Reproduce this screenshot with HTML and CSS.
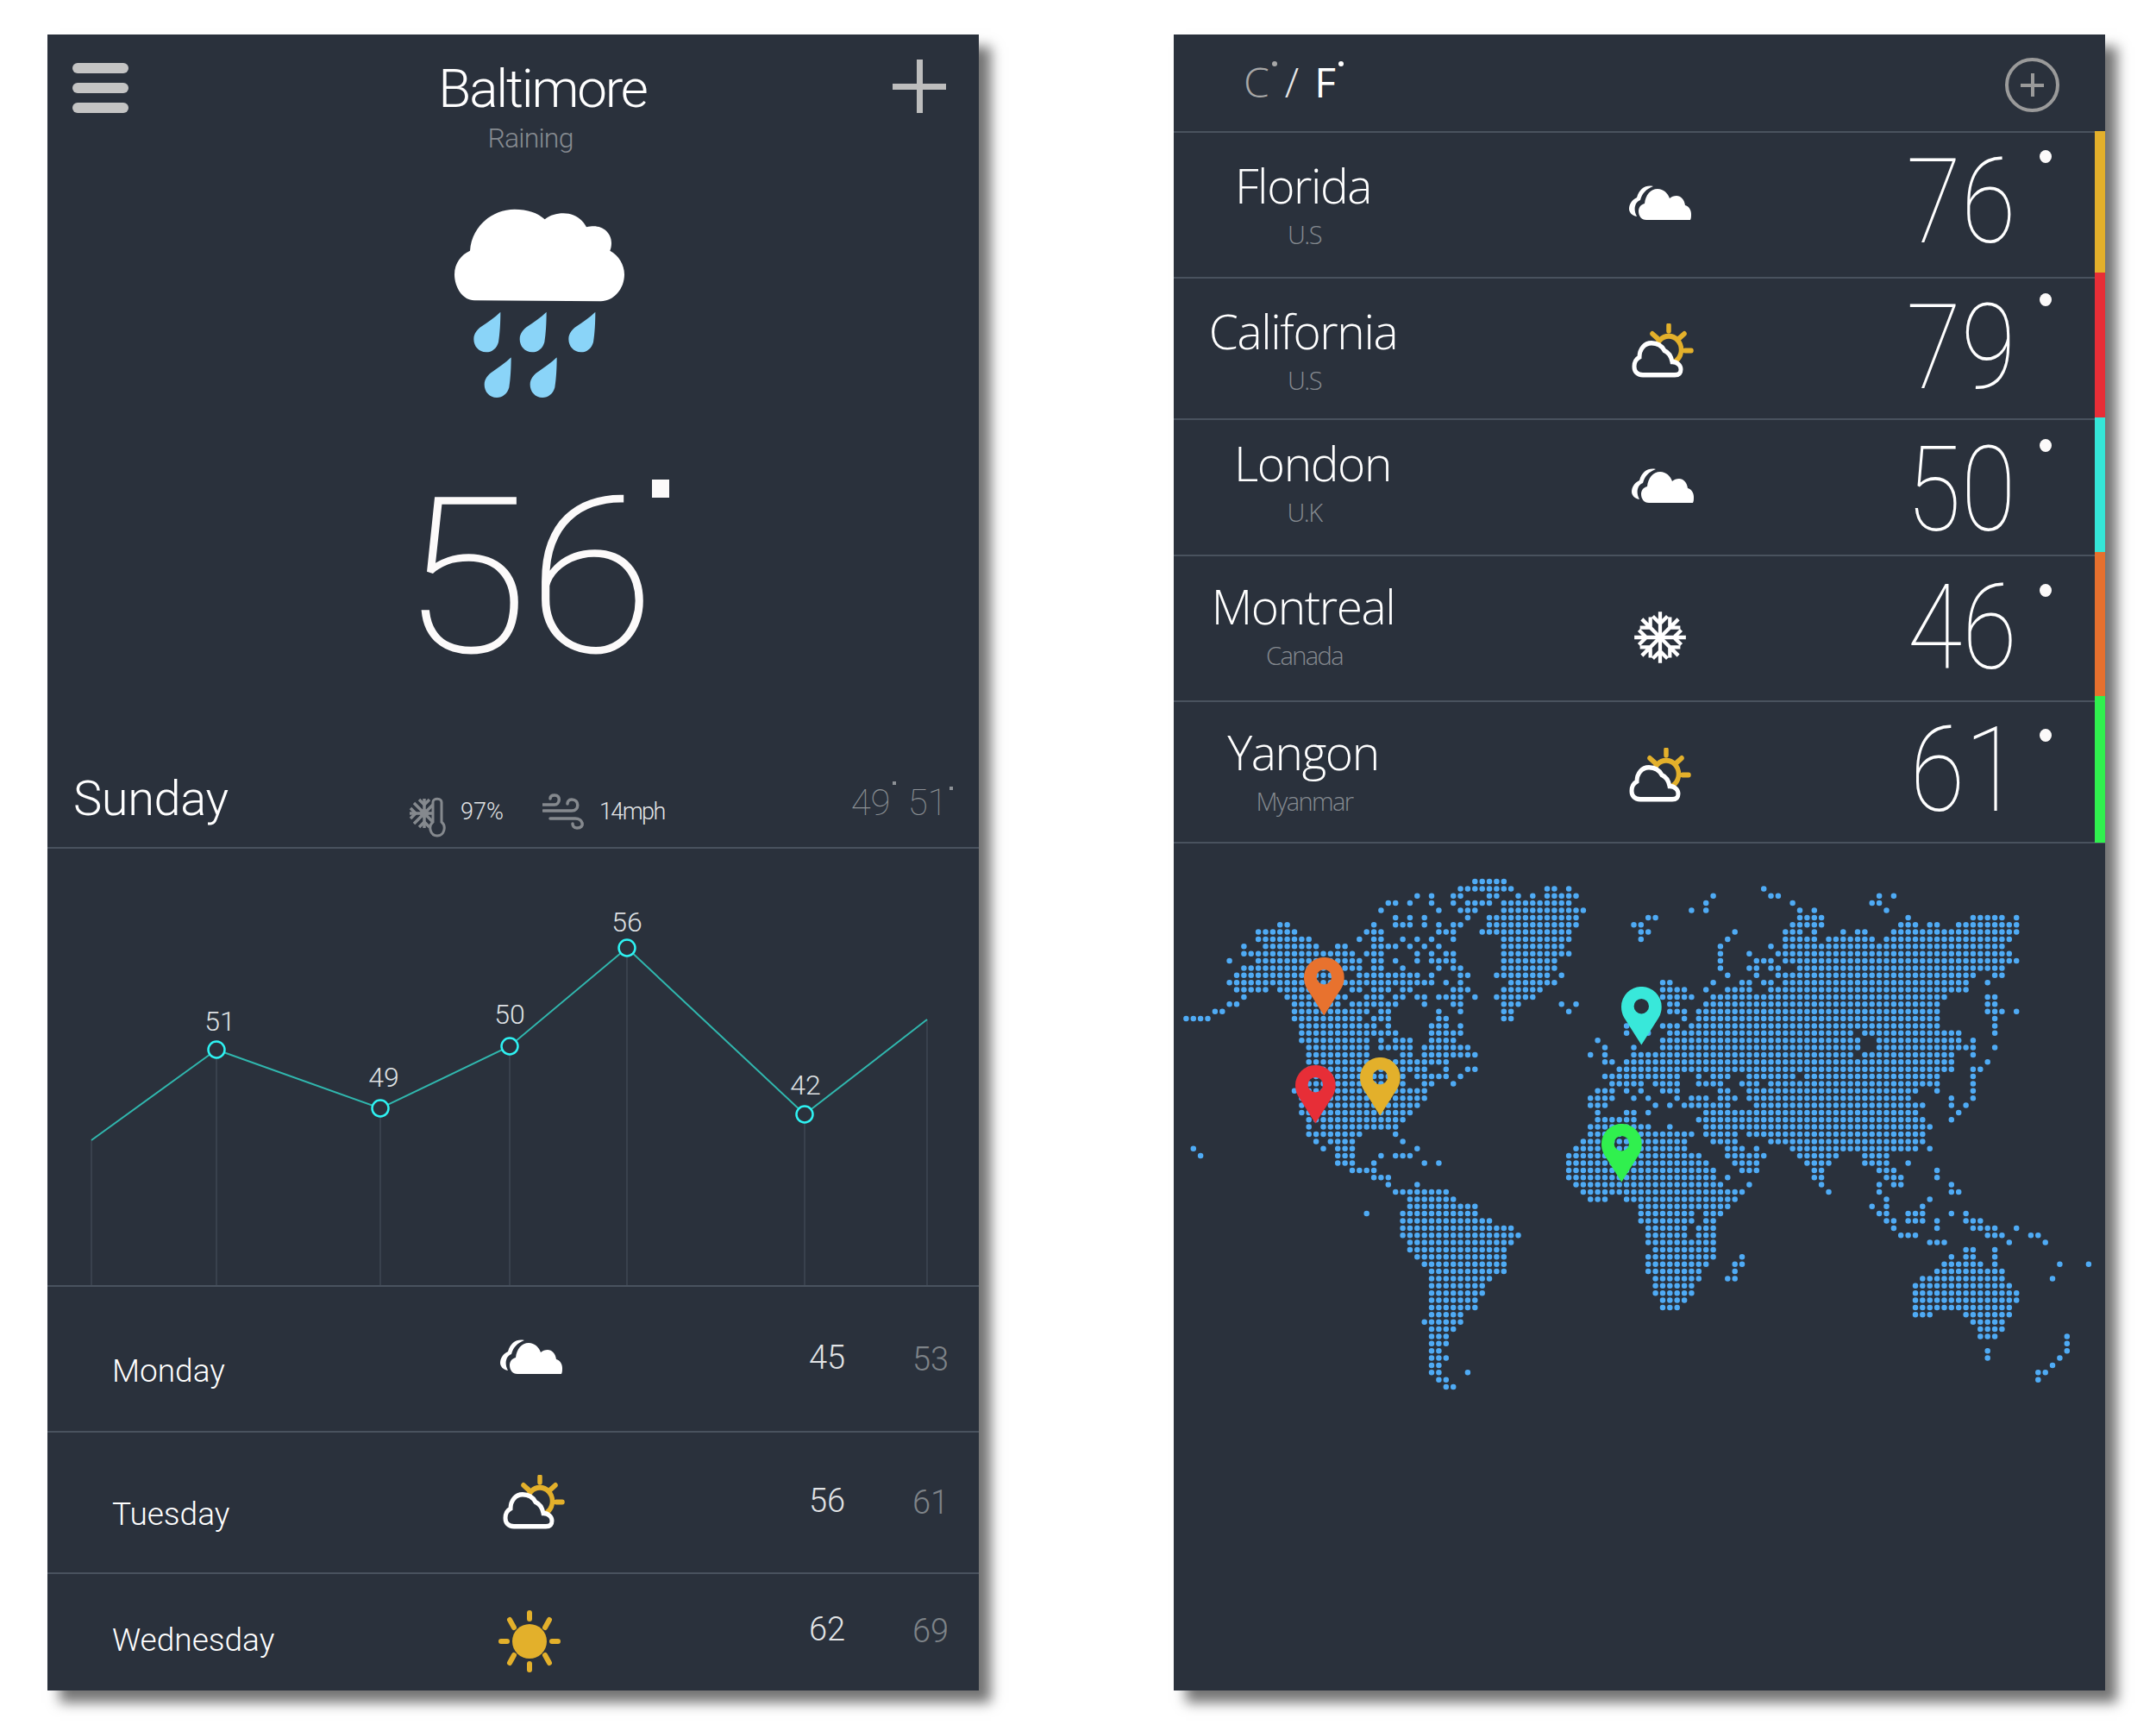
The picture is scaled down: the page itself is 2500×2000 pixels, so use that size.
FILE: index.html
```html
<!DOCTYPE html>
<html lang="en">
<head>
    <meta charset="UTF-8">
    <meta name="viewport" content="width=device-width, initial-scale=1.0">
    <title>Weather</title>
    <link rel="stylesheet" href="styles.css">
</head>
<body>
    <svg class="icon-defs">
        <symbol id="i-cloud" viewBox="0 0 72 40">
            <path class="white" d="M28 1C20 -1 12 3 9 14C3 17 0 22 0 27C0 31 3 35 9 36C7 32 6 28 7 24C8 20 10 18 13 17C15 9 20 4 28 1Z"/>
            <path class="white" d="M20 40C14 40 11 35 11 30C11 25 14 22 18 21C19 11 25 4 33 4C40 4 45 9 47 15C49 13 52 12 55 12C60 12 64 16 65 23C69 24 72 28 72 33C72 36 72 38 71 40Z"/>
        </symbol>
        <symbol id="i-partly" viewBox="0 0 72 58" preserveAspectRatio="none">
            <circle class="sun-line" cx="43" cy="28" r="14.5"/>
            <path class="sun-line" d="M43 2V8M24 11L30 16M61 11L55 16M62 29H69"/>
            <path class="cloud-line" d="M13 55C6 55 3 51 3 46C3 41 5 38 9 36C9 27 15 21 23 21C30 21 35 24 38 29C43 31 46 36 47 41C53 41 57 45 57 49C57 53 55 55 50 55Z"/>
        </symbol>
        <symbol id="i-sun" viewBox="0 0 72 72">
            <circle class="sun-fill" cx="36" cy="36" r="20"/>
            <path class="sun-ray" d="M36 3V10M36 62V69M3 36H10M62 36H69M13 11L18 20M59 11L54 20M13 61L18 52M59 61L54 52"/>
        </symbol>
        <symbol id="i-flake" viewBox="0 0 60 60">
            <g class="flake">
                <g id="flake-arm"><path d="M30 30V2M22 7L30 15L38 7"/></g>
                <use href="#flake-arm" transform="rotate(45 30 30)"/>
                <use href="#flake-arm" transform="rotate(90 30 30)"/>
                <use href="#flake-arm" transform="rotate(135 30 30)"/>
                <use href="#flake-arm" transform="rotate(180 30 30)"/>
                <use href="#flake-arm" transform="rotate(225 30 30)"/>
                <use href="#flake-arm" transform="rotate(270 30 30)"/>
                <use href="#flake-arm" transform="rotate(315 30 30)"/>
            </g>
        </symbol>
        <symbol id="i-drop" viewBox="0 0 100 145">
            <path d="M97 0C97 35 95 75 90 105C84 127 67 140 47 140C22 140 4 120 4 95C4 75 17 60 32 50C52 35 77 20 97 0Z"/>
        </symbol>
        <symbol id="i-pin" viewBox="0 0 47 68">
            <path fill-rule="evenodd" d="M23.3 67.5L3.3 36C1 32 0 28 0 23.3A23.3 23.3 0 0 1 46.7 23.3C46.7 28 45.7 32 43.3 36ZM14.6 22.7a8.7 8.7 0 1 0 17.4 0a8.7 8.7 0 1 0 -17.4 0Z"/>
        </symbol>
    </svg>

    <main class="screens">
        <!-- forecast screen -->
        <section class="panel">
            <header class="head">
                <div class="burger"><span></span><span></span><span></span></div>
                <div class="title">
                    <h1>Baltimore</h1>
                    <p>Raining</p>
                </div>
                <div class="plus"></div>
            </header>

            <svg class="rain" viewBox="0 0 840 780">
                <path class="white" d="M210 385C170 385 141 340 141 295C141 255 165 225 195 212C200 130 270 68 350 68C395 68 430 80 455 103C475 88 495 82 520 82C555 82 585 100 600 130C610 127 618 127 625 127C660 127 687 152 687 185C687 195 685 205 682 212C712 228 732 260 732 295C732 345 695 388 650 388Z"/>
                <g class="drops">
                    <use href="#i-drop" x="204" y="425" width="100" height="145"/>
                    <use href="#i-drop" x="364" y="425" width="100" height="145"/>
                    <use href="#i-drop" x="534" y="425" width="100" height="145"/>
                    <use href="#i-drop" x="241" y="583" width="100" height="145"/>
                    <use href="#i-drop" x="400" y="583" width="100" height="145"/>
                </g>
            </svg>

            <div class="now">
                <span class="now-num">56</span>
                <i class="now-deg"></i>
            </div>

            <div class="today">
                <h2>Sunday</h2>
                <svg class="therm" viewBox="0 0 44 48">
                    <g class="therm-flake">
                        <path d="M18 3V37M1 20H35M6 8L30 32M30 8L6 32"/>
                        <path d="M12 4L18 10L24 4M12 36L18 30L24 36M2 14L8 20L2 26"/>
                    </g>
                    <circle class="therm-core" cx="18" cy="20" r="5"/>
                    <path class="therm-tube" d="M28 30V7C28 2 38 2 38 7V30C44 35 41 46 33 46C25 46 22 35 28 30Z"/>
                </svg>
                <span class="stat">97%</span>
                <svg class="wind" viewBox="0 0 50 42">
                    <path d="M0 13H14C20 13 22 2 14 2C10 2 9 4 9 6"/>
                    <path d="M1 20H34C43 20 43 7 34 7C30 7 29 10 29 12"/>
                    <path d="M9 29H38C47 29 50 40 40 40C36 40 35 37 35 35"/>
                </svg>
                <span class="stat stat-wind">14mph</span>
                <span class="range">49<i class="tick"></i></span>
                <span class="range">51<i class="tick"></i></span>
            </div>

            <svg class="chart" viewBox="0 0 1080 506">
                <path class="chart-grid" d="M51 338V506M196 233V506M386 301V506M536 229V506M672 115V506M878 308V506M1020 198V506"/>
                <path class="chart-line" d="M51 338L196 233L386 301L536 229L672 115L878 308L1020 198"/>
                <circle class="chart-dot" cx="196" cy="233" r="9.5"/>
                <circle class="chart-dot" cx="386" cy="301" r="9.5"/>
                <circle class="chart-dot" cx="536" cy="229" r="9.5"/>
                <circle class="chart-dot" cx="672" cy="115" r="9.5"/>
                <circle class="chart-dot" cx="878" cy="308" r="9.5"/>
                <text class="chart-label" x="200" y="211">51</text>
                <text class="chart-label" x="390" y="276">49</text>
                <text class="chart-label" x="536" y="203">50</text>
                <text class="chart-label" x="672" y="96">56</text>
                <text class="chart-label" x="879" y="285">42</text>
            </svg>

            <div class="day day-mon">
                <span class="day-name">Monday</span>
                <svg class="day-icon day-icon-cloud"><use href="#i-cloud"/></svg>
                <span class="hi">45</span>
                <span class="lo">53</span>
            </div>
            <div class="day day-tue">
                <span class="day-name">Tuesday</span>
                <svg class="day-icon day-icon-partly"><use href="#i-partly"/></svg>
                <span class="hi">56</span>
                <span class="lo">61</span>
            </div>
            <div class="day day-wed">
                <span class="day-name">Wednesday</span>
                <svg class="day-icon day-icon-sun"><use href="#i-sun"/></svg>
                <span class="hi">62</span>
                <span class="lo">69</span>
            </div>
        </section>

        <!-- cities screen -->
        <section class="panel">
            <header class="units">
                <div class="unit-text">
                    <span class="unit-c">C<i class="deg"></i></span>
                    <span class="unit-slash">/</span>
                    <span class="unit-f">F<i class="deg"></i></span>
                </div>
                <div class="add"></div>
            </header>

            <div class="cities">
                <div class="bars">
                    <span class="bar bar-yellow"></span>
                    <span class="bar bar-red"></span>
                    <span class="bar bar-cyan"></span>
                    <span class="bar bar-orange"></span>
                    <span class="bar bar-green"></span>
                </div>

                <div class="city city-florida">
                    <div class="where"><h3>Florida</h3><p>U.S</p></div>
                    <svg class="city-icon icon-cloud"><use href="#i-cloud"/></svg>
                    <div class="temp">76</div>
                    <i class="temp-deg"></i>
                </div>
                <div class="city city-california">
                    <div class="where"><h3>California</h3><p>U.S</p></div>
                    <svg class="city-icon icon-partly"><use href="#i-partly"/></svg>
                    <div class="temp">79</div>
                    <i class="temp-deg"></i>
                </div>
                <div class="city city-london">
                    <div class="where"><h3>London</h3><p>U.K</p></div>
                    <svg class="city-icon icon-cloud"><use href="#i-cloud"/></svg>
                    <div class="temp">50</div>
                    <i class="temp-deg"></i>
                </div>
                <div class="city city-montreal">
                    <div class="where"><h3>Montreal</h3><p>Canada</p></div>
                    <svg class="city-icon icon-flake"><use href="#i-flake"/></svg>
                    <div class="temp">46</div>
                    <i class="temp-deg"></i>
                </div>
                <div class="city city-yangon">
                    <div class="where"><h3>Yangon</h3><p>Myanmar</p></div>
                    <svg class="city-icon icon-partly"><use href="#i-partly"/></svg>
                    <div class="temp">61</div>
                    <i class="temp-deg"></i>
                </div>
            </div>

            <svg class="map" viewBox="0 0 1080 984">
                <path id="dots" class="map-dots"/>
                <use class="pin-orange" href="#i-pin" x="151" y="134" width="47" height="68"/>
                <use class="pin-red" href="#i-pin" x="141" y="259" width="47" height="68"/>
                <use class="pin-yellow" href="#i-pin" x="216" y="250" width="47" height="68"/>
                <use class="pin-cyan" href="#i-pin" x="519" y="168" width="47" height="68"/>
                <use class="pin-green" href="#i-pin" x="496" y="327" width="47" height="68"/>
            </svg>
        </section>
    </main>

    <script src="map.js"></script>
</body>
</html>
```

FILE: styles.css
```css
body {
    margin: 0;
    background: white;
    font-family: Roboto, "Liberation Sans", sans-serif;
    font-weight: 300;
    color: #fff;
}
h1, h2, h3, p {
    margin: 0;
    font-weight: inherit;
}
.icon-defs {
    display: none;
}
.white {
    fill: #fff;
}

.screens {
    display: flex;
    gap: 226px;
    padding: 40px 0 40px 55px;
}
.panel {
    width: 1080px;
    height: 1920px;
    background: #2a313c;
    box-shadow: 14px 14px 14px rgba(0, 0, 0, 0.55);
}

/* forecast screen */
.head {
    display: flex;
    height: 180px;
    box-sizing: border-box;
    padding: 29px 38px 0 29px;
}
.burger {
    display: flex;
    flex-direction: column;
    gap: 11px;
    width: 65px;
    margin-top: 4px;
}
.burger span {
    height: 12px;
    border-radius: 6px;
    background: #c4c4c4;
}
.title {
    flex: 1;
    text-align: center;
    padding-left: 74px;
}
.title h1 {
    font-size: 62px;
    line-height: 68px;
    letter-spacing: -2.2px;
}
.title p {
    font-size: 32px;
    line-height: 40px;
    margin-top: 3px;
    margin-right: 28px;
    letter-spacing: -0.8px;
    color: #858a90;
}
.plus {
    width: 62px;
    height: 62px;
    background:
        linear-gradient(#bdbdbd, #bdbdbd) center / 7px 100% no-repeat,
        linear-gradient(#bdbdbd, #bdbdbd) center / 100% 7px no-repeat;
}
.rain {
    display: block;
    width: 280px;
    height: 260px;
    margin-left: 425px;
}
.drops {
    fill: #8ad4f8;
}
.now {
    display: flex;
    align-items: flex-start;
    height: 329px;
    padding: 65px 0 0 411px;
    box-sizing: border-box;
    font-size: 250px;
    font-weight: 100;
    line-height: 250px;
    color: #fcfafa;
}
.now-num {
    transform: scaleX(1.07);
    transform-origin: 0 0;
    -webkit-text-stroke: 2px #fcfafa;
}
.now-deg {
    width: 20px;
    height: 21px;
    margin: 11px 0 0 16px;
    background: #fcfafa;
}
.today {
    display: flex;
    align-items: baseline;
    height: 175px;
    box-sizing: border-box;
    padding: 84px 0 0 30px;
    border-bottom: 2px solid #49525e;
}
.today h2 {
    width: 389px;
    font-size: 56px;
    line-height: 66px;
    letter-spacing: -0.4px;
}
.therm {
    display: block;
    flex: none;
    align-self: flex-start;
    width: 44px;
    height: 48px;
    margin-top: 30px;
}
.therm-flake path {
    fill: none;
    stroke: #85898e;
    stroke-width: 3.5;
}
.therm-core {
    fill: #85898e;
}
.therm-tube {
    fill: #2a313c;
    stroke: #85898e;
    stroke-width: 3;
}
.wind {
    display: block;
    flex: none;
    align-self: flex-start;
    width: 50px;
    height: 42px;
    margin: 27px 0 0 45px;
    fill: none;
    stroke: #85898e;
    stroke-width: 3.5;
    stroke-linecap: round;
}
.stat {
    align-self: flex-start;
    margin: 32px 0 0 16px;
    font-size: 27px;
    line-height: 32px;
    color: #e2e4e6;
}
.stat-wind {
    letter-spacing: -1.6px;
}
.range {
    width: 66px;
    font-size: 42px;
    font-weight: 100;
    color: #8d9196;
    white-space: nowrap;
}
.stat + .range {
    margin-left: 216px;
}
.tick {
    display: inline-block;
    width: 4px;
    height: 4px;
    margin-left: 2px;
    background: #8d9196;
    vertical-align: 35px;
}
.range + .range .tick {
    vertical-align: 29px;
}
.chart {
    display: block;
    width: 1080px;
    height: 506px;
}
.chart-grid {
    fill: none;
    stroke: #49525e;
    stroke-width: 1;
}
.chart-line {
    fill: none;
    stroke: #30b7ae;
    stroke-width: 2;
}
.chart-dot {
    fill: #2a313c;
    stroke: #2ef2f2;
    stroke-width: 2.5;
}
.chart-label {
    font-size: 32px;
    fill: #dfe1e4;
    text-anchor: middle;
}
.day {
    display: grid;
    grid-template-columns: 446px 80px 282px 120px 1fr;
    align-items: start;
    box-sizing: border-box;
    padding-left: 75px;
    border-top: 2px solid #49525e;
}
.day-mon {
    height: 169px;
    padding-top: 60px;
}
.day-tue {
    height: 164px;
    padding-top: 57px;
}
.day-wed {
    height: 137px;
    padding-top: 42px;
}
.day-name {
    margin-top: 16px;
    font-size: 37px;
    line-height: 44px;
}
.day-wed .day-name {
    margin-top: 13px;
}
.day-icon {
    display: block;
    justify-self: center;
    width: 72px;
}
.day-icon-cloud {
    height: 40px;
    margin-top: 1px;
}
.day-icon-partly {
    height: 63px;
    margin: -8px 0 0 6px;
}
.day-icon-sun {
    height: 72px;
    margin: 0 5px 0 0;
}
.hi, .lo {
    font-size: 38px;
    line-height: 44px;
}
.hi {
    grid-column: 4;
    color: #e2e4e6;
}
.lo {
    margin-top: 2px;
    color: #7e8388;
}

/* cities screen */
.units {
    display: flex;
    justify-content: space-between;
    align-items: flex-start;
    height: 112px;
    box-sizing: border-box;
    padding: 24px 53px 0 81px;
}
.unit-text {
    display: flex;
    gap: 9px;
    font-family: "Open Sans", sans-serif;
    font-size: 48px;
    line-height: 62px;
}
.unit-c {
    color: #a8a8a8;
}
.unit-slash {
    color: #e8e8e8;
}
.unit-f {
    margin-left: 9px;
    font-weight: 400;
}
.deg {
    display: inline-block;
    width: 6px;
    height: 6px;
    margin-left: 3px;
    border-radius: 50%;
    background: currentColor;
    vertical-align: 36px;
}
.add {
    width: 55px;
    height: 55px;
    margin-top: 3px;
    border: 4px solid #9a9a9a;
    border-radius: 50%;
    background:
        linear-gradient(#9a9a9a, #9a9a9a) center / 4px 27px no-repeat,
        linear-gradient(#9a9a9a, #9a9a9a) center / 27px 4px no-repeat;
}
.cities {
    position: relative;
    border-top: 2px solid #49525e;
}
.bars {
    position: absolute;
    top: -2px;
    right: 0;
    display: flex;
    flex-direction: column;
    width: 12px;
}
.bar {
    display: block;
}
.bar-yellow { height: 164px; background: #e3b02b; }
.bar-red { height: 168px; background: #e72e37; }
.bar-cyan { height: 156px; background: #35e6d8; }
.bar-orange { height: 167px; background: #e6702e; }
.bar-green { height: 170px; background: #30f04e; }

.city {
    display: grid;
    grid-template-columns: 300px 528px 170px 26px;
    align-items: start;
    box-sizing: border-box;
    border-bottom: 2px solid #49525e;
    font-family: "Open Sans", sans-serif;
}
.city-florida { height: 169px; --name: 26px; --name-x: 0px; --icon: 61px; --icon-x: 0px; --temp: 10px; --temp-x: 0px; --dot: 20px; }
.city-california { height: 164px; --name: 26px; --name-x: 0px; --icon: 52px; --icon-x: 6px; --temp: 10px; --temp-x: 0px; --dot: 17px; }
.city-london { height: 158px; --name: 15px; --name-x: 22px; --icon: 56px; --icon-x: 6px; --temp: 11px; --temp-x: 0px; --dot: 22px; }
.city-montreal { height: 169px; --name: 23px; --name-x: 0px; --icon: 62px; --icon-x: 0px; --temp: 13px; --temp-x: 3px; --dot: 32px; }
.city-yangon { height: 164px; --name: 23px; --name-x: 0px; --icon: 53px; --icon-x: 0px; --temp: 9px; --temp-x: 10px; --dot: 31px; }

.where {
    margin-top: var(--name);
    text-align: center;
}
.where h3 {
    margin-left: var(--name-x);
    font-size: 55px;
    line-height: 70px;
    letter-spacing: -1.4px;
}
.where p {
    margin-top: 4px;
    margin-left: 3px;
    font-size: 29px;
    line-height: 36px;
    letter-spacing: -1.6px;
    color: #858a90;
}
.city-icon {
    display: block;
    justify-self: center;
    margin-top: var(--icon);
    margin-left: var(--icon-x);
    width: 72px;
}
.icon-cloud {
    height: 40px;
}
.icon-partly {
    height: 63px;
}
.icon-flake {
    width: 64px;
    height: 64px;
}
.temp {
    margin-top: var(--temp);
    padding-left: var(--temp-x);
    font-family: Roboto, sans-serif;
    font-size: 138px;
    font-weight: 100;
    line-height: 140px;
    text-align: center;
    transform: scaleX(0.84);
}
.temp-deg {
    display: block;
    justify-self: center;
    width: 14px;
    height: 15px;
    margin-top: var(--dot);
    border-radius: 50%;
    background: #fcfafa;
}

/* world map */
.map {
    display: block;
    width: 1080px;
    height: 984px;
    margin-top: -2px;
}
.map-dots {
    fill: none;
    stroke: #4fabf5;
    stroke-width: 6.5;
    stroke-linecap: round;
}
.pin-orange { fill: #e8722e; }
.pin-red { fill: #e72e37; }
.pin-yellow { fill: #e3b02b; }
.pin-cyan { fill: #38e8da; }
.pin-green { fill: #30f04e; }

/* small icon strokes */
.sun-line {
    fill: none;
    stroke: #e3b02b;
    stroke-width: 5.5;
    stroke-linecap: round;
}
.cloud-line {
    fill: #2a313c;
    stroke: #fff;
    stroke-width: 5;
}
.sun-fill {
    fill: #e3b02b;
}
.sun-ray {
    fill: none;
    stroke: #e3b02b;
    stroke-width: 6;
    stroke-linecap: round;
}
.flake path {
    fill: none;
    stroke: #fff;
    stroke-width: 4;
}
```

FILE: map.js
```js
// one line per row of the dot grid, columns as "n" or "from-to"
var rows = [
    "40-44",
    "38-45 50-51 53 80",
    "32 34 37-38 42-43 46 48 50-54 73 81-82 96 98",
    "28-29 31 34 37 39-42 44-53 72 84 95-96",
    "27 35 38-40 44-55 70 72 85 87 97",
    "29 31 33 39 42-54 64-65 85-88 100 109-113 115",
    "13-14 26 29-31 33 35 37-38 42-54 62-63 84-88 99-101 103-104 107-115",
    "10-15 25-27 35-37 41-53 63-64 76 83-85 87 91 93-94 98-115",
    "10-17 24 26-27 30 32 34 37 44-53 63 75 83-87 89-95 97-114",
    "8 11-18 21-22 26-29 31 33 35 44-52 74 81 83-113",
    "8-23 25-27 32 34 36-37 44-53 74 78 82-114",
    "6 10-24 26-27 29 32 34-37 44-51 74 79-81 83-115",
    "8-24 26-27 30 35 37-38 44-51 74 78-79 81-82 85-113",
    "7-20 24-32 34 38-39 43-50 52 75 79 82-109 112-113",
    "6-34 36 38 45-51 66-67 73 77-78 80-81 83-108 111",
    "7-11 13-20 23-24 26-28 30-31 37-39 44-49 66-69 72 75-78 81-108",
    "8 14-22 25-27 29-30 32-33 35-38 40 43-48 66-70 73-105 111-112",
    "6-7 15-21 23-29 33 37-38 44-46 52 54 67-68 72-104 111-112",
    "4-5 15-25 27-28 35 38 44-45 53 67-69 71-104 111-113 115",
    "0-3 15-24 26-28 35-36 44-45 69 71-104 112",
    "16-26 28 34-36 38 61 66-68 70-104 112",
    "16-29 34-38 61 64 67-92 94-107 112",
    "16-25 27 29-31 34-37 57 66-93 96-107 109",
    "17-25 27-31 33-39 58 62 66-93 96-109 112",
    "17-25 30-31 33-40 56 58 62-92 94-106 109",
    "17-36 58-59 61-106 111",
    "17-33 36 39-40 60-106 109-110",
    "17-30 32-36 38 58-68 71 73-75 78-84 86-104 109",
    "17-30 33-34 37 59-63 65-68 71-74 77-79 81-104 109",
    "15 17-33 57-59 61 63 66-68 74-75 78-101 104 109",
    "16-33 56-59 62 64 68 70-72 74-76 78-100 106 109",
    "16-32 56-58 65 67 69-75 79-102 106 108",
    "16-31 57 61-62 64 72-101 107",
    "17-30 57-62 71-102 106",
    "17 19-29 56-64 67 72-103",
    "17-24 29 56-70 72-76 78-102",
    "18 20-23 30 55-69 73-76 81-102",
    "1 19 21-23 32 54-69 75-77 79 84-101 103",
    "2 21-23 27 29-31 53-71 75-80 85-90 94-97",
    "21-23 26 33 35 53-72 76-79 86-89 94-97 100",
    "23-26 53-73 77-79 87-88 96-98 104",
    "26-28 53-73 75 87-88 97-99 104",
    "28 32 54-74 78 88 96 98-99 106",
    "29-36 55-77 89 96 106-107",
    "31-37 56-58 61-76 97 103",
    "31-40 63-75 95 97 102",
    "25 30-40 63-70 72-74 96-97 100-102 106 108",
    "30-42 63-70 72-73 97-98 100-102 104 108-110",
    "30-45 64-69 71-73 98 104 109-112 115",
    "30-46 64-69 71-73 99-101 111-113 117-118",
    "31-45 64-73 103-105 114 119",
    "31-44 65-73 108-109 112",
    "32-44 64-73 77 106 108-109 112",
    "33-44 64-72 76-77 105-110 112 121 125",
    "34-44 64-71 76 104-113",
    "34-42 65-71 75-76 102-113 120",
    "34-41 65-70 101-114",
    "34-41 65-70 101-115",
    "34-40 66-69 101-115",
    "34-40 66-68 101-114",
    "34-38 101-103 108-114",
    "33-38 109-113",
    "34-37 110-113",
    "34-36 110-112 122",
    "34-36 122",
    "34-35 111 122",
    "34-36 111 121",
    "34-35 120",
    "34-35 39 118-119",
    "35-36 118",
    "36-37"
];

var pitch = 8.372;
var startX = 14.4;
var startY = 46;
var d = "";

rows.forEach(function (row, r) {
    row.split(" ").forEach(function (part) {
        var ends = part.split("-").map(Number);
        var last = ends.length > 1 ? ends[1] : ends[0];
        for (var c = ends[0]; c <= last; c++) {
            d += "M" + (startX + c * pitch).toFixed(1) + " " + (startY + r * pitch).toFixed(1) + "h.01";
        }
    });
});

document.getElementById("dots").setAttribute("d", d);
```
